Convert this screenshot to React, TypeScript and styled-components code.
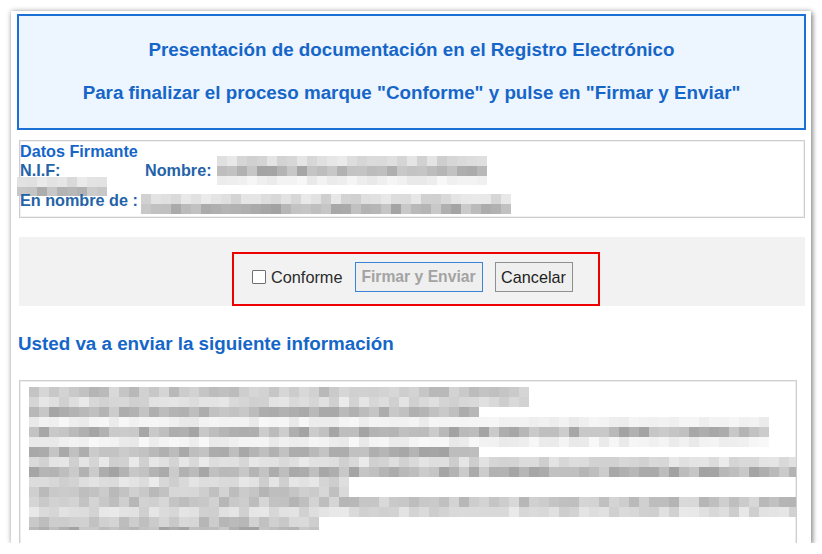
import React from "react";
import styled, { createGlobalStyle } from "styled-components";

const Global = createGlobalStyle`
  html, body { margin: 0; padding: 0; background: #ffffff; }
  body { font-family: "Liberation Sans", Arial, sans-serif; }
`;

const Frame = styled.div`
  margin: 11px 0 0 11px;
  width: 800px;
  height: 532px;
  box-sizing: border-box;
  padding: 3px 5px 0 6px;
  background: #ffffff;
  overflow: hidden;
  display: flex;
  flex-direction: column;
  box-shadow: 0 0 5px rgba(0, 0, 0, 0.28), 2px 2px 5px rgba(0, 0, 0, 0.35);
`;

const Header = styled.div`
  flex: none;
  box-sizing: border-box;
  height: 116px;
  border: 2px solid #1b70d6;
  background: #edf5ff;
  padding: 23px 0 0;
  display: flex;
  flex-direction: column;
  align-items: center;
  gap: 21px;
`;

const HeaderLine = styled.div`
  font-size: 18.8px;
  line-height: 22px;
  font-weight: bold;
  color: #1566c8;
  white-space: nowrap;
`;

const Signer = styled.div`
  flex: none;
  margin: 10px 1px 0 2px;
  border: 1px solid #cdcdcd;
  box-shadow: inset 0 0 0 1px #f1f1f1;
  padding: 1px 0 7px 0;
  display: flex;
  flex-direction: column;
`;

const SignerTitle = styled.div`
  font-size: 16.2px;
  line-height: 19px;
  height: 19px;
  font-weight: bold;
  color: #1566c8;
  white-space: nowrap;
`;

const FieldRow = styled.div<{ $h: number }>`
  display: flex;
  align-items: flex-start;
  height: ${(p) => p.$h}px;
`;

const Label = styled.span<{ $w?: number }>`
  flex: none;
  ${(p) => (p.$w ? `width: ${p.$w}px;` : "")}
  font-size: 16.2px;
  line-height: 19px;
  font-weight: bold;
  color: #2463a8;
  white-space: nowrap;
`;

const Slot = styled.div<{ $top: number; $left: number }>`
  flex: none;
  margin-top: ${(p) => p.$top}px;
  margin-left: ${(p) => p.$left}px;
`;

const ActionPanel = styled.div`
  flex: none;
  margin: 19px 1px 0 2px;
  height: 69px;
  box-sizing: border-box;
  padding: 15px 0 0 8px;
  background: #f2f2f2;
  display: flex;
  justify-content: center;
`;

const Highlight = styled.div`
  width: 368px;
  height: 54px;
  box-sizing: border-box;
  border: 2px solid #ee0000;
  padding: 0 0 4px 18px;
  display: flex;
  align-items: center;
`;

const CheckLabel = styled.label`
  display: flex;
  align-items: center;
  gap: 5px;
  font-size: 16.3px;
  color: #2b2b2b;
`;

const CheckBox = styled.span`
  width: 14px;
  height: 14px;
  box-sizing: border-box;
  border: 1px solid #707070;
  border-radius: 1px;
  background: #ffffff;
  margin-top: -1px;
`;

const Button = styled.button<{ $w: number; $primary?: boolean }>`
  width: ${(p) => p.$w}px;
  height: 30px;
  box-sizing: border-box;
  padding: 0;
  margin-left: 12px;
  font-family: "Liberation Sans", Arial, sans-serif;
  font-size: ${(p) => (p.$primary ? "15.7px" : "16.2px")};
  font-weight: ${(p) => (p.$primary ? "bold" : "normal")};
  color: ${(p) => (p.$primary ? "#a3a3a3" : "#1e1e1e")};
  background: #efefef;
  border: 1px solid ${(p) => (p.$primary ? "#3a84d8" : "#8f8f8f")};
  border-radius: 0;
  white-space: nowrap;
`;

const SectionTitle = styled.div`
  flex: none;
  margin: 27px 0 0 1px;
  font-size: 18.8px;
  line-height: 22px;
  font-weight: bold;
  color: #1566c8;
  white-space: nowrap;
`;

const InfoBox = styled.div`
  flex: none;
  margin: 25px 9px 0 2px;
  height: 200px;
  border: 1px solid #cfcfcf;
  box-shadow: inset 0 0 0 1px #ececec;
  padding: 6px 0 0 9px;
  overflow: hidden;
`;

/* ---------- pixelated (redacted) content ---------- */

type Level = "d" | "m" | "l" | "f";
type PixRow = { level: Level; cells: number; h?: number };

const ranges: Record<Level, [number, number]> = {
  d: [162, 205],
  m: [180, 218],
  l: [205, 235],
  f: [232, 248],
};

const makeRand = (seed: number) => {
  let s = seed;
  return () => {
    s = (s * 9301 + 49297) % 233280;
    return s / 233280;
  };
};

const PixBlock = styled.div`
  display: flex;
  flex-direction: column;
`;

const PixLine = styled.div<{ $h: number }>`
  display: flex;
  height: ${(p) => p.$h}px;
`;

const PixCell = styled.span`
  flex: none;
  width: 10px;
  height: 100%;
`;

const Pixelated: React.FC<{ rows: PixRow[]; seed: number }> = ({ rows, seed }) => {
  const rnd = makeRand(seed);
  return (
    <PixBlock>
      {rows.map((r, i) => {
        const [lo, hi] = ranges[r.level];
        return (
          <PixLine key={i} $h={r.h ?? 10}>
            {Array.from({ length: r.cells }).map((_, j) => {
              const v = Math.round(lo + rnd() * (hi - lo));
              return <PixCell key={j} style={{ background: `rgb(${v},${v},${v})` }} />;
            })}
          </PixLine>
        );
      })}
    </PixBlock>
  );
};

const infoRows: PixRow[] = [
  { level: "m", cells: 50 },
  { level: "l", cells: 50 },
  { level: "d", cells: 45 },
  { level: "f", cells: 74 },
  { level: "d", cells: 74 },
  { level: "f", cells: 74 },
  { level: "d", cells: 45 },
  { level: "l", cells: 77 },
  { level: "d", cells: 77 },
  { level: "l", cells: 32 },
  { level: "m", cells: 32 },
  { level: "m", cells: 77 },
  { level: "l", cells: 77 },
  { level: "m", cells: 29 },
  { level: "d", cells: 29, h: 3 },
];

export default function App() {
  return (
    <>
      <Global />
      <Frame>
        <Header>
          <HeaderLine>Presentación de documentación en el Registro Electrónico</HeaderLine>
          <HeaderLine>Para finalizar el proceso marque "Conforme" y pulse en "Firmar y Enviar"</HeaderLine>
        </Header>

        <Signer>
          <SignerTitle>Datos Firmante</SignerTitle>
          <FieldRow $h={19}>
            <Label $w={125}>N.I.F:</Label>
            <Label>Nombre:</Label>
            <Slot $top={-5} $left={5}>
              <Pixelated
                seed={11}
                rows={[
                  { level: "l", cells: 27 },
                  { level: "d", cells: 27 },
                  { level: "f", cells: 27, h: 9 },
                ]}
              />
            </Slot>
          </FieldRow>
          <FieldRow $h={11}>
            <Slot $top={-3} $left={-3}>
              <Pixelated
                seed={37}
                rows={[
                  { level: "l", cells: 9 },
                  { level: "d", cells: 9, h: 9 },
                ]}
              />
            </Slot>
          </FieldRow>
          <FieldRow $h={19}>
            <Label $w={121}>En nombre de :</Label>
            <Slot $top={3} $left={0}>
              <Pixelated
                seed={73}
                rows={[
                  { level: "l", cells: 37 },
                  { level: "d", cells: 37 },
                ]}
              />
            </Slot>
          </FieldRow>
        </Signer>

        <ActionPanel>
          <Highlight>
            <CheckLabel>
              <CheckBox />
              Conforme
            </CheckLabel>
            <Button $w={128} $primary disabled>
              Firmar y Enviar
            </Button>
            <Button $w={78}>Cancelar</Button>
          </Highlight>
        </ActionPanel>

        <SectionTitle>Usted va a enviar la siguiente información</SectionTitle>

        <InfoBox>
          <Pixelated seed={5} rows={infoRows} />
        </InfoBox>
      </Frame>
    </>
  );
}
